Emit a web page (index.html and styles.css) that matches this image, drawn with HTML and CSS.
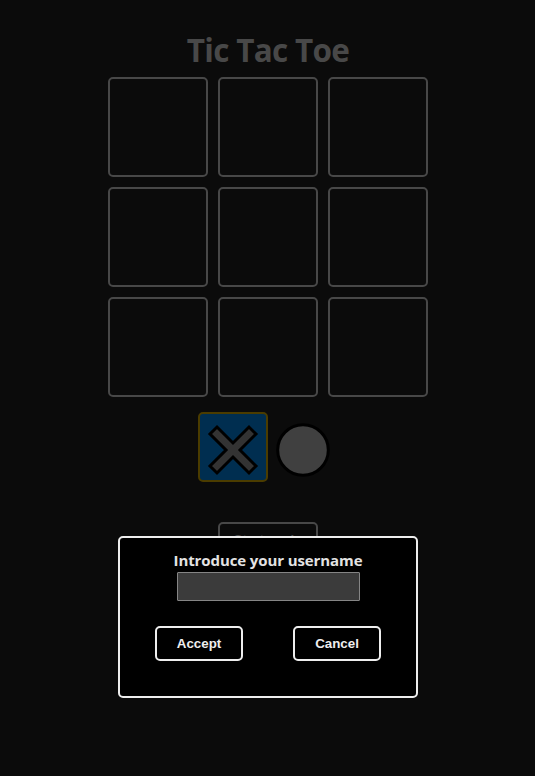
FILE: index.html
```html
<!DOCTYPE html>
<html lang="en">
<head>
<meta charset="utf-8">
<title>Tic Tac Toe</title>
<link rel="stylesheet" href="styles.css">
</head>
<body>
<main class="game">
<h1 class="title">Tic Tac Toe</h1>
<section class="board">
<div class="square"></div><div class="square"></div><div class="square"></div>
<div class="square"></div><div class="square"></div><div class="square"></div>
<div class="square"></div><div class="square"></div><div class="square"></div>
</section>
<section class="turns">
<div class="turn selected"><svg width="66" height="66" viewBox="0 0 66 66"><path d="M17 13 33 29 49 13 56 20 40 36 56 52 49 59 33 43 17 59 10 52 26 36 10 20Z" fill="#333" stroke="#000" stroke-width="3"/></svg></div>
<div class="turn"><svg width="66" height="66" viewBox="0 0 66 66"><circle cx="33" cy="36" r="25.300" fill="#404040" stroke="#000" stroke-width="3"/></svg></div>
</section>
<button class="start">Start again</button>
</main>
<div class="dialog">
<label class="label" for="username">Introduce your username</label>
<input class="field" id="username" type="text">
<div class="actions"><button class="action">Accept</button><button class="action">Cancel</button></div>
</div>
</body>
</html>
```
FILE: styles.css
```css
* { box-sizing: border-box; }
body {
  margin: 0;
  height: 776px;
  overflow: hidden;
  background: #0b0b0b;
  font-family: "Segoe UI", "Open Sans", sans-serif;
}
.game {
  display: flex;
  flex-direction: column;
  align-items: center;
  padding: 28px 0 0 1px;
}
.title {
  margin: 0 0 6px;
  color: #484848;
  font-size: 31.5px;
  line-height: 43px;
  letter-spacing: -0.7px;
}
.board {
  display: grid;
  grid-template-columns: repeat(3, 100px);
  grid-auto-rows: 100px;
  gap: 10px;
}
.square { border: 2px solid #484848; border-radius: 5px; }
.turns { display: flex; margin-top: 15px; }
.turn {
  width: 70px;
  height: 70px;
  border: 2px solid transparent;
  border-radius: 5px;
}
.turn svg { display: block; }
.selected { background: #002e50; border-color: #4b3c00; }
.start {
  width: 100px;
  height: 35px;
  margin-top: 40px;
  padding: 0;
  border: 2px solid #484848;
  border-radius: 5px;
  background: transparent;
  color: #484848;
  font: bold 13.333px "Liberation Sans", sans-serif;
}
.dialog {
  position: absolute;
  left: 118px;
  top: 536px;
  width: 300px;
  height: 162px;
  display: flex;
  flex-direction: column;
  align-items: center;
  padding-top: 11px;
  border: 2px solid #eee;
  border-radius: 5px;
  background: #000;
}
.label {
  margin-bottom: 1px;
  color: #e3e3e3;
  font-size: 15px;
  font-weight: 700;
  line-height: 22px;
  letter-spacing: -0.1px;
  white-space: nowrap;
}
.field {
  width: 183px;
  height: 29px;
  border: 1px solid #858585;
  border-radius: 1px;
  background: #3b3b3b;
  color: #fff;
}
.actions { display: flex; gap: 50px; margin-top: 25px; }
.action {
  width: 88px;
  height: 35px;
  padding: 0;
  border: 2px solid #eee;
  border-radius: 5px;
  background: #000;
  color: #eee;
  font: bold 13.333px "Liberation Sans", sans-serif;
}
```
